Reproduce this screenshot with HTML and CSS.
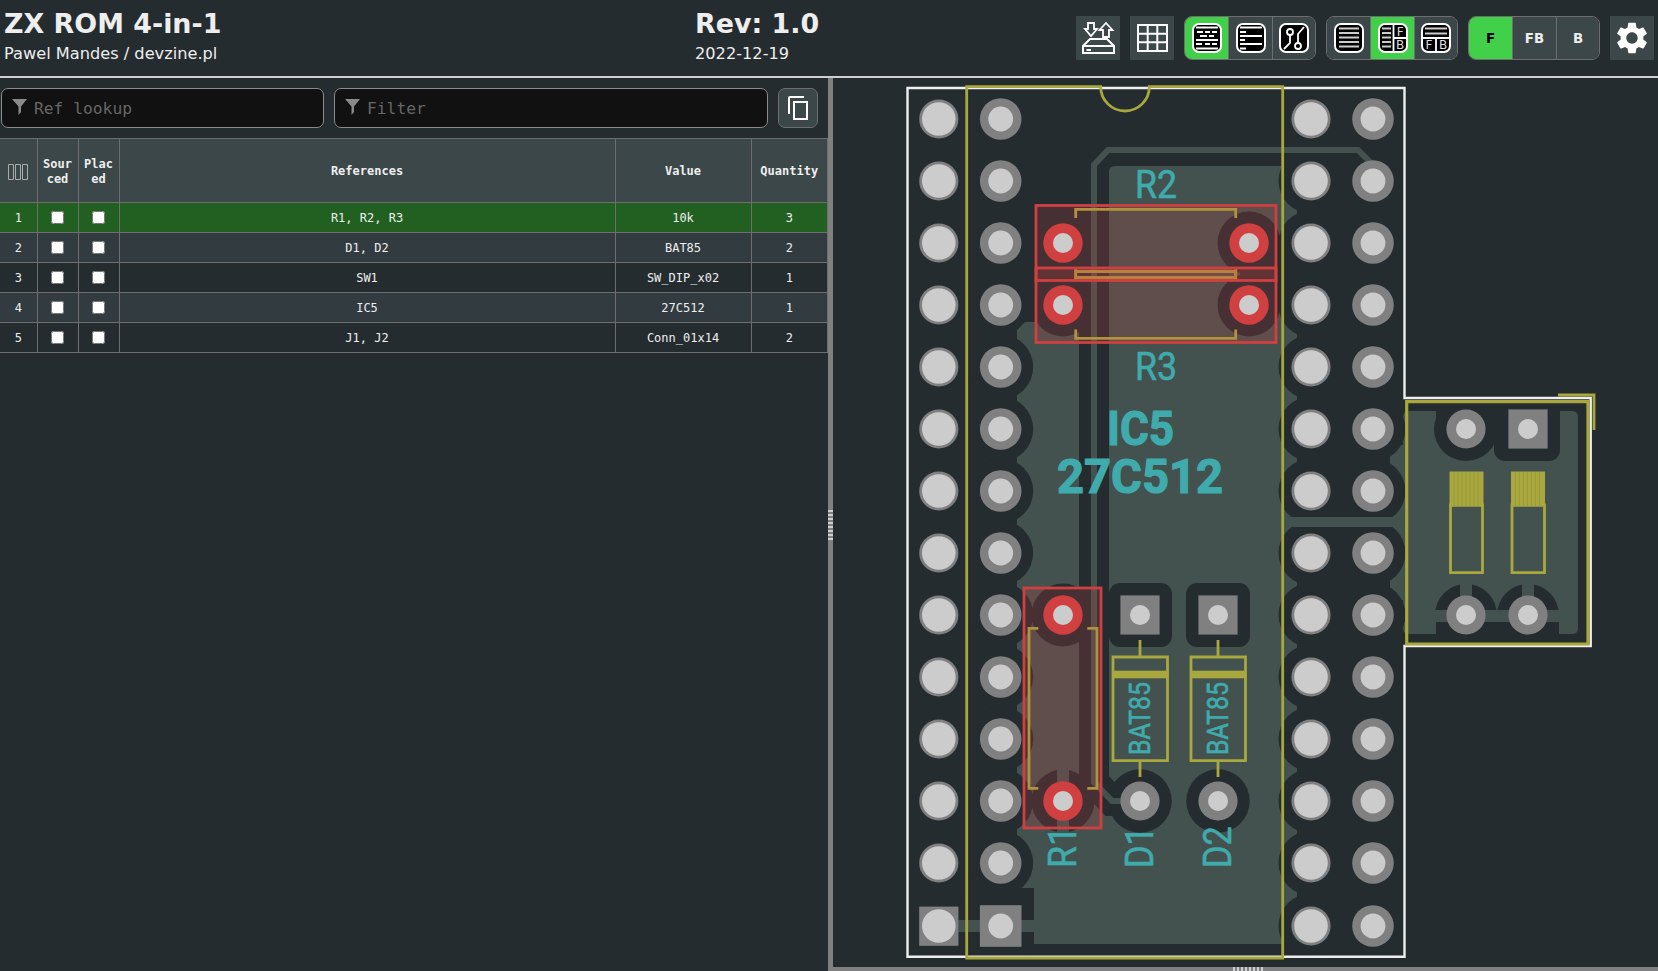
FILE: index.html
```html
<!DOCTYPE html>
<html lang="en">
<head>
    <meta charset="UTF-8">
    <title>ZX ROM 4-in-1 BOM</title>
    <link rel="stylesheet" href="styles.css">
</head>
<body>

    <header class="topbar">
        <div class="title-block">
            <div class="title">ZX ROM 4-in-1</div>
            <div class="subtitle">Pawel Mandes / devzine.pl</div>
        </div>
        <div class="rev-block">
            <div class="title">Rev: 1.0</div>
            <div class="subtitle">2022-12-19</div>
        </div>
        <div class="toolbar">
            <button class="iconbtn">
                <svg class="ico44" viewBox="0 0 44 44">
                    <path class="line-w" d="M12 7H18V13H21L15 20 9 13H12Z"/>
                    <path class="line-w" d="M30 7L36.5 14H33V21H27V14H23.5Z"/>
                    <path class="line-w2" d="M7 37V30L14 23H31L38 30V37ZM7 30H38M10.5 34H15"/>
                </svg>
            </button>
            <button class="iconbtn">
                <svg class="ico44" viewBox="0 0 44 44">
                    <path class="line-w2" d="M8 9H37V35H8ZM8 17.7H37M8 26.3H37M17.7 9V35M27.3 9V35"/>
                </svg>
            </button>

            <div class="btn-group">
                <button class="seg depressed">
                    <svg class="ico30" viewBox="0 0 30 30">
                        <rect class="icobox" x="1" y="1" width="28" height="28" rx="6"/>
                        <path class="line-w" d="M4 4.5H26M5 9H11M13 9H18M20 9H25M8 13H15M17 13H22M4 17H26M4 21H10M13 21H18M20 21H25M4 25.5H26"/>
                    </svg>
                </button>
                <button class="seg">
                    <svg class="ico30" viewBox="0 0 30 30">
                        <rect class="icobox" x="1" y="1" width="28" height="28" rx="6"/>
                        <path class="line-w" d="M4 4.5H26M4 9H10M4 13H26M4 17H9M4 21H26M4 25.5H10"/>
                    </svg>
                </button>
                <button class="seg">
                    <svg class="ico30" viewBox="0 0 30 30">
                        <rect class="icobox" x="1" y="1" width="28" height="28" rx="6"/>
                        <path class="line-w" d="M11 12V20L5 26M25 4L19 11V20"/>
                        <circle class="line-w" cx="11" cy="9" r="3"/>
                        <circle class="line-w" cx="19" cy="23" r="3"/>
                    </svg>
                </button>
            </div>

            <div class="btn-group">
                <button class="seg">
                    <svg class="ico30" viewBox="0 0 30 30">
                        <rect class="icobox" x="1" y="1" width="28" height="28" rx="6"/>
                        <path class="line-g" d="M5 5.5H25M5 10H25M5 14.5H25M5 19H25M5 23.5H25"/>
                    </svg>
                </button>
                <button class="seg depressed">
                    <svg class="ico30" viewBox="0 0 30 30">
                        <rect class="icobox" x="1" y="1" width="28" height="28" rx="6"/>
                        <path class="line-g" d="M4 5.5H13M4 10H13M4 14.5H13M4 19H13M4 23.5H13"/>
                        <path class="line-w" d="M15.5 1V29M15.5 15H29"/>
                        <text class="ico-letter" x="22.2" y="12.5">F</text>
                        <text class="ico-letter" x="22.2" y="26">B</text>
                    </svg>
                </button>
                <button class="seg">
                    <svg class="ico30" viewBox="0 0 30 30">
                        <rect class="icobox" x="1" y="1" width="28" height="28" rx="6"/>
                        <path class="line-g" d="M4 5.5H26M4 10.5H26"/>
                        <path class="line-w" d="M1 15H29M15 15V29"/>
                        <text class="ico-letter" x="8" y="26">F</text>
                        <text class="ico-letter" x="22" y="26">B</text>
                    </svg>
                </button>
            </div>

            <div class="btn-group">
                <button class="seg seg-text depressed">F</button>
                <button class="seg seg-text">FB</button>
                <button class="seg seg-text">B</button>
            </div>

            <button class="iconbtn">
                <svg class="gear" viewBox="0 0 24 24">
                    <path d="M19.14,12.94c0.04-0.3,0.06-0.61,0.06-0.94c0-0.32-0.02-0.64-0.07-0.94l2.03-1.58c0.18-0.14,0.23-0.41,0.12-0.61 l-1.92-3.32c-0.12-0.22-0.37-0.29-0.59-0.22l-2.39,0.96c-0.5-0.38-1.03-0.7-1.62-0.94L14.4,2.81c-0.04-0.24-0.24-0.41-0.48-0.41 h-3.84c-0.24,0-0.43,0.17-0.47,0.41L9.25,5.35C8.66,5.59,8.12,5.92,7.63,6.29L5.24,5.33c-0.22-0.08-0.47,0-0.59,0.22L2.74,8.87 C2.62,9.08,2.66,9.34,2.86,9.48l2.03,1.58C4.84,11.36,4.8,11.69,4.8,12s0.02,0.64,0.07,0.94l-2.03,1.58 c-0.18,0.14-0.23,0.41-0.12,0.61l1.92,3.32c0.12,0.22,0.37,0.29,0.59,0.22l2.39-0.96c0.5,0.38,1.03,0.7,1.62,0.94l0.36,2.54 c0.05,0.24,0.24,0.41,0.48,0.41h3.84c0.24,0,0.44-0.17,0.47-0.41l0.36-2.54c0.59-0.24,1.13-0.56,1.62-0.94l2.39,0.96 c0.22,0.08,0.47,0,0.59-0.22l1.92-3.32c0.12-0.22,0.07-0.47-0.12-0.61L19.14,12.94z M12,15.6c-1.98,0-3.6-1.62-3.6-3.6 s1.62-3.6,3.6-3.6s3.6,1.62,3.6,3.6S13.98,15.6,12,15.6z"/>
                </svg>
            </button>
        </div>
    </header>

    <main class="split">
        <section class="bom-pane">
            <div class="filters">
                <label class="filter filter-ref">
                    <svg class="funnel" viewBox="0 0 15 16"><path d="M0 0H15L9 7.5V13L6.5 16V7.5Z"/></svg>
                    <input type="text" placeholder="Ref lookup">
                </label>
                <label class="filter filter-main">
                    <svg class="funnel" viewBox="0 0 15 16"><path d="M0 0H15L9 7.5V13L6.5 16V7.5Z"/></svg>
                    <input type="text" placeholder="Filter">
                </label>
                <button class="copybtn">
                    <svg class="copyico" viewBox="0 0 24 26">
                        <path d="M3 19V3Q3 2 4 2H18M8 7H21V24H8Z"/>
                    </svg>
                </button>
            </div>

            <table class="bom">
                <colgroup>
                    <col class="c-num"><col class="c-check"><col class="c-check">
                    <col class="c-refs"><col class="c-value"><col class="c-qty">
                </colgroup>
                <thead>
                    <tr>
                        <th>
                            <svg class="colsico" viewBox="0 0 20 16">
                                <path d="M.5.5H5.5V15.5H.5ZM7.5.5H12.5V15.5H7.5ZM14.5.5H19.5V15.5H14.5Z"/>
                            </svg>
                        </th>
                        <th>Sourced</th>
                        <th>Placed</th>
                        <th>References</th>
                        <th>Value</th>
                        <th>Quantity</th>
                    </tr>
                </thead>
                <tbody>
                    <tr class="highlighted">
                        <td>1</td><td><input type="checkbox"></td><td><input type="checkbox"></td>
                        <td>R1, R2, R3</td><td>10k</td><td>3</td>
                    </tr>
                    <tr>
                        <td>2</td><td><input type="checkbox"></td><td><input type="checkbox"></td>
                        <td>D1, D2</td><td>BAT85</td><td>2</td>
                    </tr>
                    <tr>
                        <td>3</td><td><input type="checkbox"></td><td><input type="checkbox"></td>
                        <td>SW1</td><td>SW_DIP_x02</td><td>1</td>
                    </tr>
                    <tr>
                        <td>4</td><td><input type="checkbox"></td><td><input type="checkbox"></td>
                        <td>IC5</td><td>27C512</td><td>1</td>
                    </tr>
                    <tr>
                        <td>5</td><td><input type="checkbox"></td><td><input type="checkbox"></td>
                        <td>J1, J2</td><td>Conn_01x14</td><td>2</td>
                    </tr>
                </tbody>
            </table>
        </section>

        <div class="gutter-v"></div>

        <section class="pcb-pane">
            <!-- viewBox uses page coordinates so board numbers are easy to check -->
            <svg class="pcb" viewBox="833 78 825 889">
                <defs>
                    <circle id="clr" r="32.5"/>
                    <g id="pad-a"><circle class="ring" r="19.6"/><circle class="hole" r="16.8"/></g>
                    <g id="pad-b"><circle class="ring" r="20.8"/><circle class="hole" r="12.4"/></g>
                    <g id="pad-c"><circle class="ring" r="19.6"/><circle class="hole" r="10"/></g>
                    <g id="pad-s"><rect class="ring" x="-19.6" y="-19.6" width="39.2" height="39.2"/><circle class="hole" r="10"/></g>
                    <g id="pad-r"><circle class="pad-red" r="19.7"/><circle class="hole" r="10"/></g>
                </defs>

                <!-- copper pour -->
                <path class="zone" d="M1109 172Q1109 166 1115 166H1297V944H1034V888H1017V330L1025 322H1079V200H1109Z"/>
                <path class="zone" d="M1403 417Q1403 411 1409 411H1572Q1578 411 1578 417V628Q1578 634 1572 634H1409Q1403 634 1403 628Z"/>
                <rect class="zone" x="1390" y="445" width="20" height="155"/>

                <!-- clearances -->
                <g class="clearance">
                    <use href="#clr" x="1000.7" y="367"/><use href="#clr" x="1000.7" y="429"/>
                    <use href="#clr" x="1000.7" y="491"/><use href="#clr" x="1000.7" y="553"/>
                    <use href="#clr" x="1000.7" y="615"/><use href="#clr" x="1000.7" y="677"/>
                    <use href="#clr" x="1000.7" y="739"/><use href="#clr" x="1000.7" y="801"/>
                    <use href="#clr" x="1000.7" y="863"/>
                    <rect x="960" y="889" width="74" height="74" rx="14"/>

                    <use href="#clr" x="1311" y="119"/><use href="#clr" x="1311" y="181"/>
                    <use href="#clr" x="1311" y="243"/><use href="#clr" x="1311" y="305"/>
                    <use href="#clr" x="1311" y="367"/><use href="#clr" x="1311" y="429"/>
                    <use href="#clr" x="1311" y="491"/><use href="#clr" x="1311" y="553"/>
                    <use href="#clr" x="1311" y="615"/><use href="#clr" x="1311" y="677"/>
                    <use href="#clr" x="1311" y="739"/><use href="#clr" x="1311" y="801"/>
                    <use href="#clr" x="1311" y="863"/><use href="#clr" x="1311" y="926"/>
                    <use href="#clr" x="1373" y="429"/><use href="#clr" x="1373" y="491"/>
                    <use href="#clr" x="1373" y="553"/><use href="#clr" x="1373" y="615"/>
                    <rect x="1311" y="150" width="62" height="800"/>

                    <rect x="1240" y="243" width="60" height="62"/>
                    <circle cx="1063" cy="305" r="31.5"/>
                    <circle cx="1249" cy="243" r="31.5"/>
                    <circle cx="1249" cy="305" r="31.5"/>
                    <circle cx="1063" cy="615" r="31.5"/>
                    <circle cx="1063" cy="801" r="31.5"/>

                    <rect x="1109" y="583" width="63" height="64" rx="11"/>
                    <rect x="1186" y="583" width="64" height="64" rx="11"/>
                    <circle cx="1140" cy="801" r="31.7"/>
                    <circle cx="1218" cy="801" r="31.7"/>

                    <circle cx="1466" cy="429" r="32"/>
                    <rect x="1494" y="400" width="66" height="61" rx="11"/>
                    <rect x="1436" y="400" width="124" height="29"/>
                    <circle cx="1466" cy="615" r="31"/>
                    <circle cx="1528" cy="615" r="31"/>
                    <rect x="1436" y="615" width="123" height="21"/>
                    <path class="track-clear" d="M1094 165V782L1112 801H1122"/>
                </g>

                <!-- tracks and thermal spokes -->
                <path class="track" d="M1122 801H1112L1094 782V165L1108 150H1358L1373 165V181"/>
                <rect class="zone" x="1280" y="517" width="125" height="10"/>
                <path class="spoke" d="M1063 765V835M939 926H1040M1466 580V616M1528 580V616M1432 616H1562"/>

                <!-- board edge -->
                <path class="edge" d="M907.5 88H1404.5V398H1590.7V646H1404.5V956.7H907.5Z"/>

                <!-- silkscreen -->
                <g class="silk">
                    <path d="M966.7 86.7H1100.7A24.3 24.3 0 0 0 1149.3 86.7H1282.7V958H966.7Z"/>
                    <path class="silk-thick" d="M1406.7 401.7H1588V644H1406.7Z"/>
                    <path d="M1558 395H1594V430"/>

                    <path d="M1450.5 505H1482.5V572.7H1450.5ZM1512 505H1544.5V572.7H1512Z"/>
                    <rect class="silk-fill" x="1449.5" y="471.5" width="34" height="35"/>
                    <rect class="silk-fill" x="1511" y="471.5" width="34" height="35"/>
                    <path class="silk-hatch" d="M1454 472V506M1458 472V506M1462 472V506M1466 472V506M1470 472V506M1474 472V506M1478 472V506M1515.5 472V506M1519.5 472V506M1523.5 472V506M1527.5 472V506M1531.5 472V506M1535.5 472V506M1539.5 472V506"/>

                    <path d="M1113 657H1167.5V760.7H1113ZM1140 640V657M1140 760.7V777"/>
                    <rect class="silk-fill" x="1112" y="670.7" width="56.5" height="7.6"/>
                    <path d="M1191 657H1245.5V760.7H1191ZM1218 640V657M1218 760.7V777"/>
                    <rect class="silk-fill" x="1190" y="670.7" width="56.5" height="7.6"/>

                    <path d="M1075.7 218V209.3H1235.7V218M1075.7 269V277.5H1235.7V269"/>
                    <path d="M1075.7 280V271.5H1235.7V280M1075.7 329.6V338.3H1235.7V329.6"/>
                    <path d="M1038.3 628.3H1029V788.3H1038.3M1087.3 628.3H1097V788.3H1087.3"/>
                </g>

                <!-- pads -->
                <g>
                    <use href="#pad-a" x="938.8" y="119"/><use href="#pad-a" x="938.8" y="181"/>
                    <use href="#pad-a" x="938.8" y="243"/><use href="#pad-a" x="938.8" y="305"/>
                    <use href="#pad-a" x="938.8" y="367"/><use href="#pad-a" x="938.8" y="429"/>
                    <use href="#pad-a" x="938.8" y="491"/><use href="#pad-a" x="938.8" y="553"/>
                    <use href="#pad-a" x="938.8" y="615"/><use href="#pad-a" x="938.8" y="677"/>
                    <use href="#pad-a" x="938.8" y="739"/><use href="#pad-a" x="938.8" y="801"/>
                    <use href="#pad-a" x="938.8" y="863"/>
                    <rect class="ring" x="919.2" y="906.6" width="39.2" height="39.2"/><circle class="hole" cx="938.8" cy="926" r="16.8"/>

                    <use href="#pad-b" x="1000.7" y="119"/><use href="#pad-b" x="1000.7" y="181"/>
                    <use href="#pad-b" x="1000.7" y="243"/><use href="#pad-b" x="1000.7" y="305"/>
                    <use href="#pad-b" x="1000.7" y="367"/><use href="#pad-b" x="1000.7" y="429"/>
                    <use href="#pad-b" x="1000.7" y="491"/><use href="#pad-b" x="1000.7" y="553"/>
                    <use href="#pad-b" x="1000.7" y="615"/><use href="#pad-b" x="1000.7" y="677"/>
                    <use href="#pad-b" x="1000.7" y="739"/><use href="#pad-b" x="1000.7" y="801"/>
                    <use href="#pad-b" x="1000.7" y="863"/>
                    <rect class="ring" x="979.9" y="905.2" width="41.6" height="41.6"/><circle class="hole" cx="1000.7" cy="926" r="12.4"/>

                    <use href="#pad-a" x="1311" y="119"/><use href="#pad-a" x="1311" y="181"/>
                    <use href="#pad-a" x="1311" y="243"/><use href="#pad-a" x="1311" y="305"/>
                    <use href="#pad-a" x="1311" y="367"/><use href="#pad-a" x="1311" y="429"/>
                    <use href="#pad-a" x="1311" y="491"/><use href="#pad-a" x="1311" y="553"/>
                    <use href="#pad-a" x="1311" y="615"/><use href="#pad-a" x="1311" y="677"/>
                    <use href="#pad-a" x="1311" y="739"/><use href="#pad-a" x="1311" y="801"/>
                    <use href="#pad-a" x="1311" y="863"/><use href="#pad-a" x="1311" y="926"/>

                    <use href="#pad-b" x="1373" y="119"/><use href="#pad-b" x="1373" y="181"/>
                    <use href="#pad-b" x="1373" y="243"/><use href="#pad-b" x="1373" y="305"/>
                    <use href="#pad-b" x="1373" y="367"/><use href="#pad-b" x="1373" y="429"/>
                    <use href="#pad-b" x="1373" y="491"/><use href="#pad-b" x="1373" y="553"/>
                    <use href="#pad-b" x="1373" y="615"/><use href="#pad-b" x="1373" y="677"/>
                    <use href="#pad-b" x="1373" y="739"/><use href="#pad-b" x="1373" y="801"/>
                    <use href="#pad-b" x="1373" y="863"/><use href="#pad-b" x="1373" y="926"/>

                    <use href="#pad-s" x="1140" y="615"/><use href="#pad-c" x="1140" y="801"/>
                    <use href="#pad-s" x="1218" y="615"/><use href="#pad-c" x="1218" y="801"/>
                    <use href="#pad-c" x="1466" y="429"/><use href="#pad-s" x="1528" y="429"/>
                    <use href="#pad-c" x="1466" y="615"/><use href="#pad-c" x="1528" y="615"/>
                </g>

                <!-- reference and value text -->
                <g class="fab">
                    <text class="ref" x="1156" y="198" textLength="42" lengthAdjust="spacingAndGlyphs">R2</text>
                    <text class="ref" x="1156" y="380" textLength="42" lengthAdjust="spacingAndGlyphs">R3</text>
                    <text class="ic" x="1140.5" y="445" textLength="67" lengthAdjust="spacingAndGlyphs">IC5</text>
                    <text class="ic" x="1140" y="492.5" textLength="166" lengthAdjust="spacingAndGlyphs">27C512</text>
                    <text class="ref" transform="translate(1076 868) rotate(-90)" textLength="42" lengthAdjust="spacingAndGlyphs">R1</text>
                    <text class="ref" transform="translate(1153 868) rotate(-90)" textLength="42" lengthAdjust="spacingAndGlyphs">D1</text>
                    <text class="ref" transform="translate(1231 868) rotate(-90)" textLength="42" lengthAdjust="spacingAndGlyphs">D2</text>
                    <text class="val" transform="translate(1150 755) rotate(-90)" textLength="73" lengthAdjust="spacingAndGlyphs">BAT85</text>
                    <text class="val" transform="translate(1227.7 755) rotate(-90)" textLength="73" lengthAdjust="spacingAndGlyphs">BAT85</text>
                </g>

                <!-- highlighted footprints -->
                <g class="hl">
                    <rect x="1036" y="205.5" width="240" height="75"/>
                    <rect x="1036" y="268" width="240" height="74.5"/>
                    <rect x="1024" y="588" width="77" height="240"/>
                </g>
                <use href="#pad-r" x="1063" y="243"/><use href="#pad-r" x="1249" y="243"/>
                <use href="#pad-r" x="1063" y="305"/><use href="#pad-r" x="1249" y="305"/>
                <use href="#pad-r" x="1063" y="615"/><use href="#pad-r" x="1063" y="801"/>
            </svg>
            <div class="gutter-h"></div>
        </section>
    </main>

</body>
</html>
```

FILE: styles.css
```css
* {
    box-sizing: border-box;
}
html, body {
    height: 100%;
}
body {
    margin: 0;
    overflow: hidden;
    display: flex;
    flex-direction: column;
    background-color: #252c30;
    color: #eeeeee;
    font-family: "DejaVu Sans", Verdana, sans-serif;
}

/* top bar */
.topbar {
    flex: 0 0 78px;
    display: flex;
    padding: 0 4px;
    border-bottom: 2px solid #cfcfcf;
}
.title-block {
    width: 691px;
}
.rev-block {
    width: 300px;
}
.title {
    font-size: 26.9px;
    font-weight: bold;
    line-height: 32px;
    margin-top: 8px;
}
.subtitle {
    font-size: 16.2px;
    line-height: 20px;
    margin-top: 4px;
}
.toolbar {
    display: flex;
    align-items: flex-start;
    gap: 10px;
    margin-left: auto;
    padding-top: 16px;
}
.iconbtn {
    width: 44px;
    height: 44px;
    padding: 0;
    display: flex;
    align-items: center;
    justify-content: center;
    border: none;
    background-color: #3b4749;
}
.ico44 {
    width: 44px;
    height: 44px;
}
.ico30 {
    width: 30px;
    height: 30px;
}
.gear {
    width: 38px;
    height: 38px;
    fill: #ffffff;
}
.btn-group {
    display: flex;
    height: 44px;
    overflow: hidden;
    border: 1px solid #6e6e6e;
    border-radius: 8px;
}
.seg {
    width: 44px;
    padding: 0;
    display: flex;
    align-items: center;
    justify-content: center;
    border: none;
    border-left: 1px solid #6e6e6e;
    background-color: #3b4749;
}
.seg:first-child {
    width: 43px;
    border-left: none;
}
.seg:last-child {
    width: 43px;
}
.seg.depressed {
    background-color: #42d04a;
}
.seg-text {
    font-family: "DejaVu Sans", Verdana, sans-serif;
    font-size: 13.33px;
    font-weight: bold;
    color: #eeeeee;
}
.seg-text.depressed {
    color: #000000;
}
.icobox {
    fill: #000000;
    stroke: #ffffff;
    stroke-width: 2;
}
.line-w, .line-w2 {
    fill: none;
    stroke: #ffffff;
    stroke-width: 1.8;
}
.line-w2 {
    stroke-width: 2;
}
.line-g {
    fill: none;
    stroke: #cccccc;
    stroke-width: 2;
}
.ico-letter {
    fill: #dddddd;
    font-family: "DejaVu Sans", sans-serif;
    font-size: 12px;
    text-anchor: middle;
}

/* main split */
.split {
    flex: 1;
    min-height: 0;
    display: flex;
}
.bom-pane {
    flex: 0 0 828px;
    overflow: hidden;
}
.gutter-v {
    flex: 0 0 5px;
    background-color: #808080;
    background-image: repeating-linear-gradient(to bottom, #cfcfcf 0 2px, transparent 2px 4px),
                      linear-gradient(to right, transparent 2px, #808080 2px 3px, transparent 3px);
    background-size: 100% 30px, 100% 30px;
    background-position: 0 432px;
    background-repeat: no-repeat;
}
.pcb-pane {
    flex: 1;
    display: flex;
    flex-direction: column;
}
.pcb {
    display: block;
    width: 825px;
    height: 889px;
}
.gutter-h {
    flex: 0 0 4px;
    background-color: #808080;
    background-image: repeating-linear-gradient(to right, #cfcfcf 0 2px, transparent 2px 4px),
                      linear-gradient(to bottom, transparent 2px, #808080 2px 3px, transparent 3px);
    background-size: 30px 100%, 30px 100%;
    background-position: 400px 0;
    background-repeat: no-repeat;
}

/* filter row */
.filters {
    display: flex;
    gap: 10px;
    padding: 10px 10px 0 1px;
    height: 60px;
}
.filter {
    position: relative;
    display: block;
    height: 40px;
}
.filter-ref {
    width: 323px;
}
.filter-main {
    width: 434px;
}
.filter input {
    width: 100%;
    height: 100%;
    padding: 0 0 0 32px;
    background-color: #111111;
    border: 1px solid #8a8a8a;
    border-radius: 7px;
    color: #eeeeee;
    font-family: "DejaVu Sans Mono", Consolas, monospace;
    font-size: 16.3px;
}
.filter input::placeholder {
    color: #666666;
}
.funnel {
    position: absolute;
    left: 11px;
    top: 11px;
    width: 15px;
    height: 16px;
    fill: #8a8a8a;
}
.copybtn {
    width: 40px;
    height: 40px;
    padding: 0;
    display: flex;
    align-items: center;
    justify-content: center;
    background-color: #3b4749;
    border: 1px solid #6e6e6e;
    border-radius: 7px;
}
.copyico {
    width: 24px;
    height: 26px;
    fill: none;
    stroke: #ffffff;
    stroke-width: 2;
}

/* bom table */
.bom {
    width: 828px;
    margin-left: -1px;
    table-layout: fixed;
    border-collapse: collapse;
    font-family: "DejaVu Sans Mono", Consolas, monospace;
    font-size: 12px;
}
.c-num { width: 37.5px; }
.c-check { width: 41px; }
.c-refs { width: 496px; }
.c-value { width: 136px; }
.c-qty { width: 76.5px; }
.bom th, .bom td {
    padding: 0 5px;
    text-align: center;
    border: 1px solid #6e6e6e;
}
.bom th {
    height: 64px;
    padding-top: 2px;
    line-height: 15px;
    word-break: break-all;
    background-color: #3b4749;
    font-weight: bold;
}
.bom th:last-child, .bom td:last-child {
    padding-left: 0;
    padding-right: 0;
}
.bom td {
    height: 30px;
}
.bom tbody tr:nth-child(even) {
    background-color: #313b40;
}
.bom tbody tr.highlighted {
    background-color: #226022;
}
.bom input[type="checkbox"] {
    display: block;
    margin: 0 auto;
    width: 13px;
    height: 13px;
}
.colsico {
    display: block;
    margin: 0 auto;
    width: 20px;
    height: 16px;
    fill: none;
    stroke: #aaaaaa;
}

/* pcb drawing */
.zone {
    fill: #43524f;
}
.clearance {
    fill: #252c30;
}
.track-clear {
    fill: none;
    stroke: #252c30;
    stroke-width: 30;
}
.track {
    fill: none;
    stroke: #43524f;
    stroke-width: 6;
}
.spoke {
    fill: none;
    stroke: #43524f;
    stroke-width: 12;
}
.edge {
    fill: none;
    stroke: #eeeeee;
    stroke-width: 2.4;
}
.ring {
    fill: #808080;
}
.hole {
    fill: #cccccc;
}
.pad-red {
    fill: #d04040;
}
.silk path, .silk rect {
    fill: none;
    stroke: #a8a83e;
    stroke-width: 2.8;
}
.silk .silk-thick {
    stroke-width: 3.2;
}
.silk .silk-fill {
    fill: #a8a83e;
    stroke: none;
}
.silk .silk-hatch {
    stroke: #9a9a38;
    stroke-width: 1;
}
.fab text {
    fill: #3fabad;
    stroke: #3fabad;
    stroke-width: 0.6;
    stroke-linejoin: round;
    font-family: "Roboto", sans-serif;
}
.fab .ref, .fab .val {
    font-size: 38px;
}
.fab text[x] {
    text-anchor: middle;
}
.fab .val {
    font-size: 29px;
}
.fab .ic {
    font-size: 48px;
    font-weight: bold;
    stroke-width: 1.2;
}
.hl rect {
    fill: rgba(208, 64, 64, 0.2);
    stroke: #d04040;
    stroke-width: 2.8;
}
```
